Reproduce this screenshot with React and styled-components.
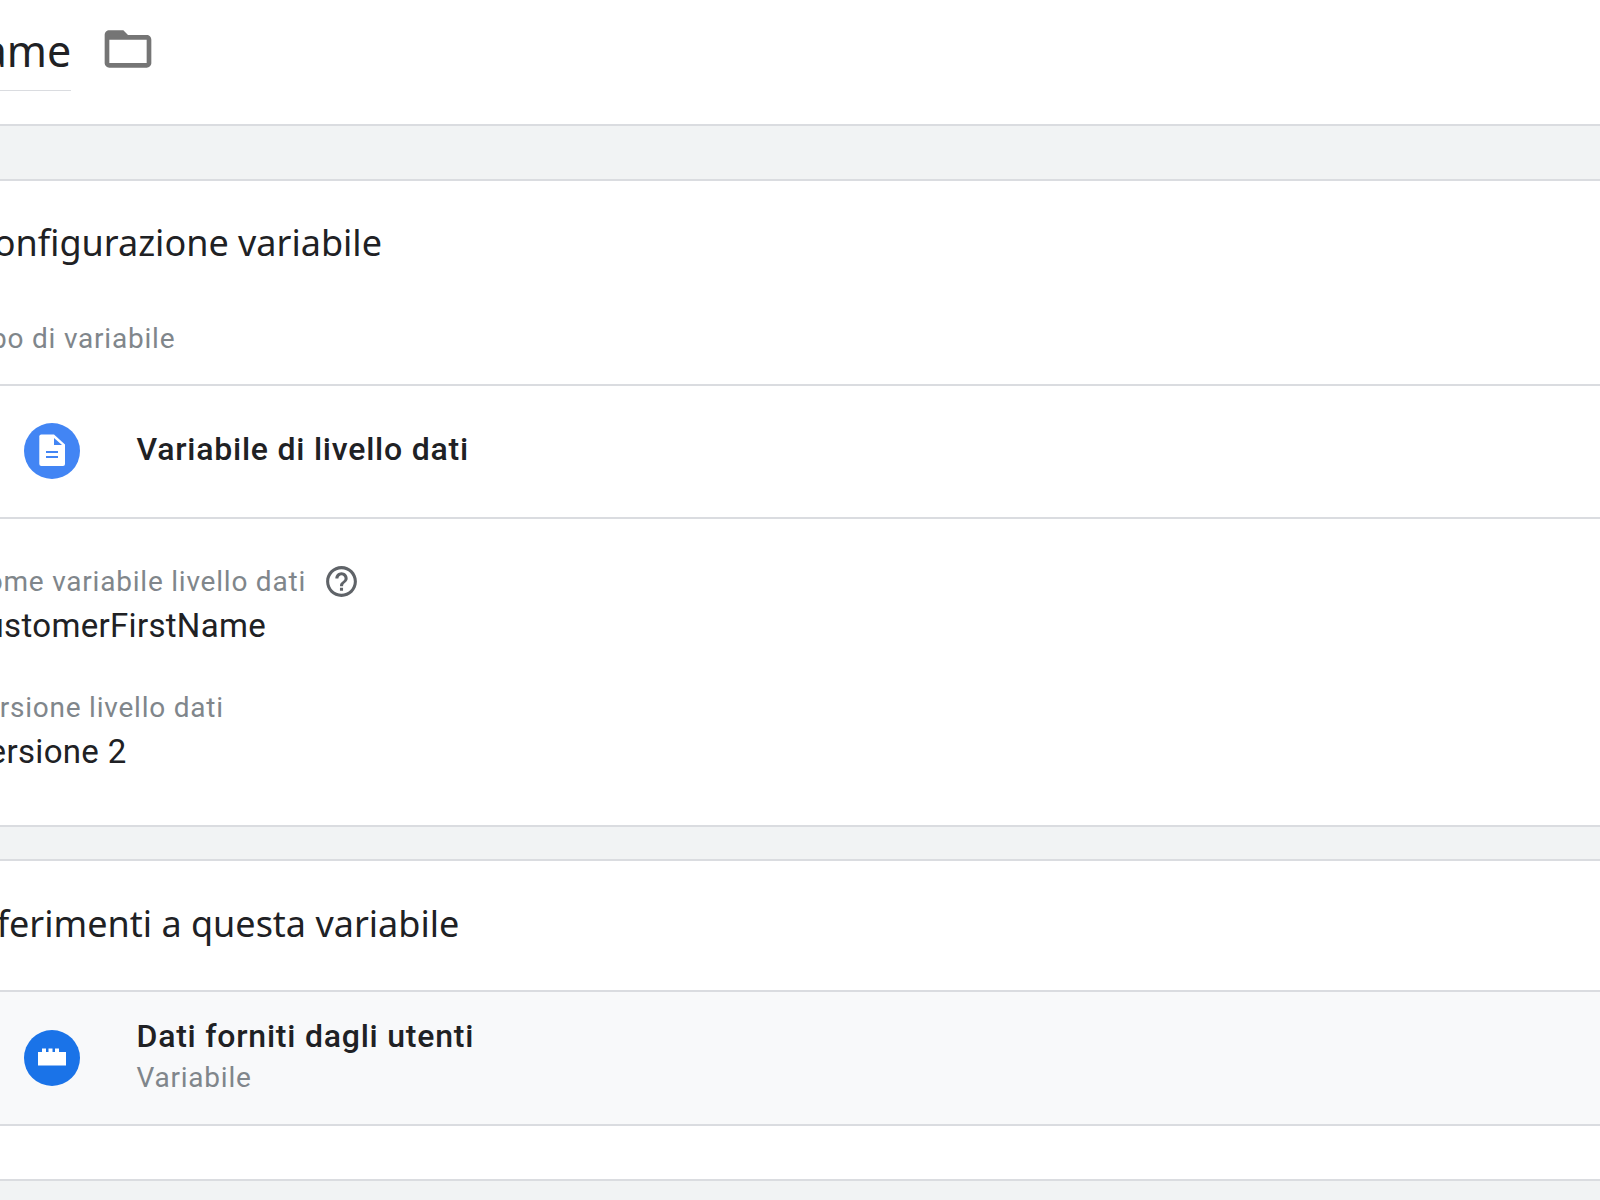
import React from "react";
import styled, { createGlobalStyle } from "styled-components";

const GlobalStyle = createGlobalStyle`
  html, body {
    margin: 0;
    padding: 0;
    background: #f1f3f4;
  }
  body {
    font-family: "Roboto", "Liberation Sans", sans-serif;
    color: #202124;
  }
`;

const Page = styled.div`
  width: 1600px;
  height: 1200px;
  overflow: hidden;
  background: #f1f3f4;
`;

const TitleBar = styled.header`
  height: 124px;
  background: #fff;
  border-bottom: 2px solid #dadce0;
  display: flex;
  align-items: flex-start;
`;

const TitleText = styled.h1`
  margin: 22px 0 0 -50px;
  padding-bottom: 10px;
  height: 58px;
  line-height: 58px;
  font-family: "Noto Sans", sans-serif;
  font-size: 43px;
  font-weight: 400;
  border-bottom: 1px solid #dadce0;
`;

const FolderIcon = styled.svg`
  width: 56px;
  height: 56px;
  margin: 21px 0 0 29px;
  fill: #757575;
`;

const Gap = styled.div`
  height: ${(p) => p.$h}px;
  background: #f1f3f4;
  border-bottom: 2px solid #dadce0;
`;

const Heading = styled.h2`
  margin: 0 0 0 ${(p) => p.$left}px;
  font-family: "Noto Sans", sans-serif;
  font-size: 36px;
  font-weight: 400;
  line-height: 48px;
  white-space: nowrap;
`;

const Section = styled.section`
  background: #fff;
  border-bottom: 2px solid #dadce0;
  padding-top: ${(p) => p.$top || 0}px;
  height: ${(p) => p.$h}px;
  box-sizing: border-box;
`;

const Label = styled.div`
  margin-left: -34px;
  margin-top: ${(p) => p.$top || 0}px;
  display: flex;
  align-items: center;
  font-size: 28px;
  line-height: 36px;
  letter-spacing: 0.78px;
  color: #80868b;
  white-space: nowrap;
`;

const Value = styled.div`
  margin-left: -32px;
  margin-top: 6px;
  font-size: 33px;
  line-height: 40px;
  letter-spacing: 0.32px;
  white-space: nowrap;
`;

const Field = styled.div`
  margin-bottom: 44px;
`;

const HelpIcon = styled.svg`
  width: 37px;
  height: 37px;
  margin-left: 17.5px;
  fill: #5f6368;
`;

const Row = styled.div`
  height: ${(p) => p.$h}px;
  background: ${(p) => (p.$shaded ? "#f8f9fa" : "#fff")};
  border-bottom: 2px solid #dadce0;
  display: flex;
  align-items: center;
  padding-left: 23.5px;
`;

const Badge = styled.svg`
  width: 56px;
  height: 56px;
  flex: none;
  margin-right: 57px;
  margin-bottom: ${(p) => p.$lift || 0}px;
`;

const RowText = styled.div`
  margin-bottom: ${(p) => p.$lift}px;
`;

const RowTitle = styled.div`
  font-size: 32px;
  font-weight: 500;
  line-height: 40px;
  letter-spacing: 0.77px;
  white-space: nowrap;
`;

const RowSub = styled.div`
  font-size: 28px;
  line-height: 36px;
  margin-top: 4px;
  letter-spacing: 0.78px;
  color: #80868b;
`;

const App = () => {
  return (
    <Page>
      <GlobalStyle />
      <TitleBar>
        <TitleText>Name</TitleText>
        <FolderIcon viewBox="0 0 24 24">
          <path d="M20 6h-8l-2-2H4c-1.1 0-2 .9-2 2v12c0 1.1.9 2 2 2h16c1.1 0 2-.9 2-2V8c0-1.1-.9-2-2-2zm0 12H4V8h16v10z" />
        </FolderIcon>
      </TitleBar>
      <Gap $h={53} />
      <Section $h={205} $top={38}>
        <Heading $left={-29}>Configurazione variabile</Heading>
        <Label $top={54}>Tipo di variabile</Label>
      </Section>
      <Row $h={131}>
        <Badge viewBox="0 0 56 56" $lift={1}>
          <circle cx="28" cy="28" r="28" fill="#4285f4" />
          <path d="M17.3 11.5H30L41 21.5V41a2 2 0 0 1-2 2H17.3a2 2 0 0 1-2-2V13.5a2 2 0 0 1 2-2z" fill="#fff" />
          <path d="M30 15l8 7h-8z" fill="#4285f4" />
          <rect x="22" y="28" width="12" height="2" fill="#4285f4" />
          <rect x="22" y="33" width="12" height="2" fill="#4285f4" />
        </Badge>
        <RowText $lift={6}>
          <RowTitle>Variabile di livello dati</RowTitle>
        </RowText>
      </Row>
      <Section $h={308} $top={44}>
        <Field>
          <Label>
            Nome variabile livello dati
            <HelpIcon viewBox="0 0 24 24">
              <path d="M11 18h2v-2h-2v2zm1-16C6.48 2 2 6.48 2 12s4.48 10 10 10 10-4.48 10-10S17.52 2 12 2zm0 18c-4.41 0-8-3.59-8-8s3.59-8 8-8 8 3.59 8 8-3.59 8-8 8zm0-14c-2.21 0-4 1.79-4 4h2c0-1.1.9-2 2-2s2 .9 2 2c0 2-3 1.75-3 5h2c0-2.25 3-2.5 3-5 0-2.21-1.79-4-4-4z" />
            </HelpIcon>
          </Label>
          <Value>customerFirstName</Value>
        </Field>
        <Field>
          <Label>Versione livello dati</Label>
          <Value>Versione 2</Value>
        </Field>
      </Section>
      <Gap $h={32} />
      <Section $h={131} $top={39}>
        <Heading $left={-35}>Riferimenti a questa variabile</Heading>
      </Section>
      <Row $h={132} $shaded>
        <Badge viewBox="0 0 56 56">
          <circle cx="28" cy="28" r="28" fill="#1a73e8" />
          <path d="M14 22h4v-3.5h4V22h2.5v-3.5h4V22H31v-3.5h4V22h7v13.5H14z" fill="#fff" />
        </Badge>
        <RowText $lift={4}>
          <RowTitle>Dati forniti dagli utenti</RowTitle>
          <RowSub>Variabile</RowSub>
        </RowText>
      </Row>
      <Section $h={55} />
    </Page>
  );
};

export default App;
